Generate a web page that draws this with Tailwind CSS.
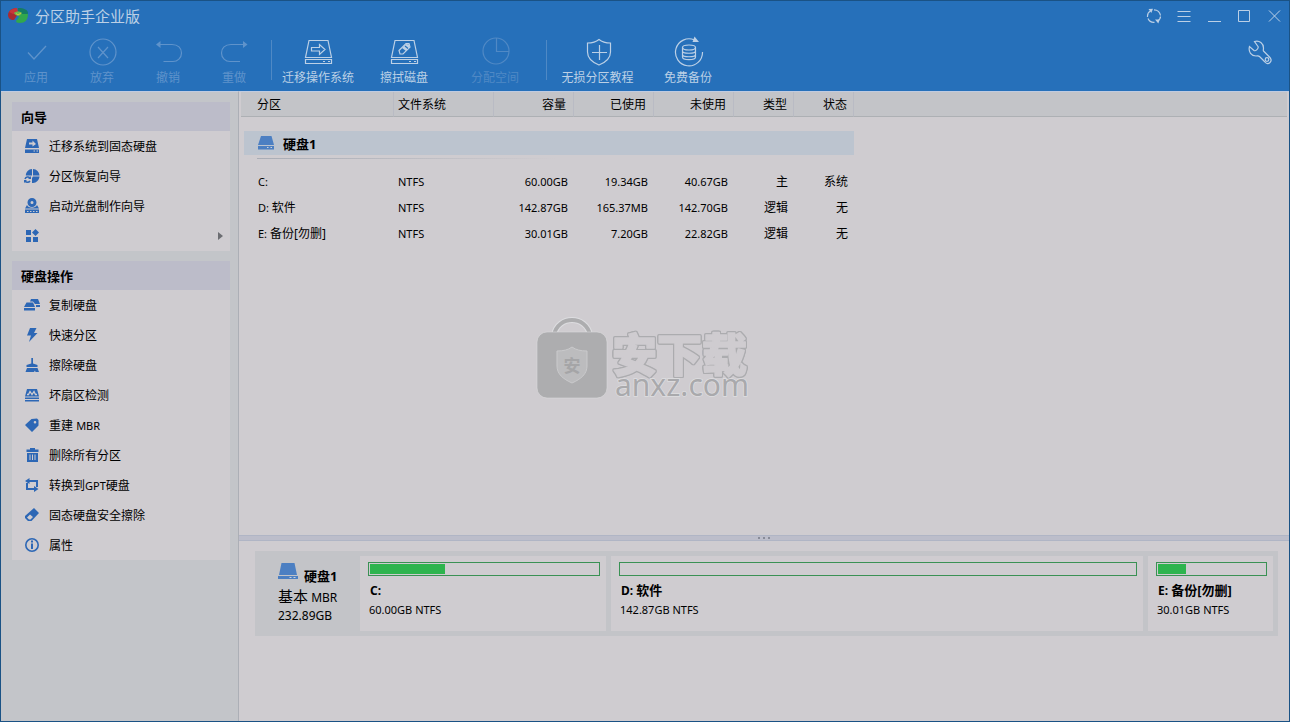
<!DOCTYPE html>
<html lang="zh-CN">
<head>
<meta charset="utf-8">
<meta name="viewport" content="width=device-width, initial-scale=1">
<title>分区助手企业版</title>
<script src="https://cdn.jsdelivr.net/npm/@tailwindcss/browser@4"></script>
</head>
<body class="font-['Noto_Sans','Noto_Sans_CJK_SC',sans-serif] text-xs text-black">
<div class="relative flex min-h-screen flex-col border border-[#1a5285] bg-[#cfccd0]">

  <header class="bg-[#2670ba] text-[#bcd0e6]">
    <div class="flex h-[30px] items-center pr-[5px] pl-[7px]">
      <svg class="h-[18px] w-5" viewBox="0 0 20 18" aria-hidden="true">
        <path d="M0 8C0 4 4 1 9 1l1 6-4 6C2 13 0 11 0 8z" fill="#a92a31"/>
        <path d="M1 5C3 2 6 1 9 1l1 5-5 1z" fill="#c8363a"/>
        <path d="M10 1c6 0 10 2 10 5l-1 4-9-3z" fill="#147d63"/>
        <path d="M10 7l10 0c0 6-3 9-8 9-3 0-4-1-4-2l3-4z" fill="#31a84c"/>
        <path d="M6 6c2-2 6-2 8 0-1 3-6 4-8 0z" fill="#6fb94a"/>
        <path d="M8 6.500l2 1.500 3-2" fill="none" stroke="#d9c23d"/>
      </svg>
      <h1 class="ml-[7px] text-[15px] leading-5">分区助手企业版</h1>
      <div class="ml-auto flex items-center gap-2.5">
        <button type="button" aria-label="刷新" class="flex size-5 items-center justify-center">
          <svg class="size-4" viewBox="0 0 16 16" fill="none" stroke="currentColor" stroke-width="1.200"><path d="M1.500 9V8C1.500 6 2.500 4 4.500 3M8 1.800c3.500 0 6 2.700 6.500 5.700M2 10.500C3 13 5.500 14.500 8.500 14.300M11.500 13c1.800-1 3-2.700 3-4.500"/><path d="M2.500 1l4.500-.300L5.300 5zM9 11.500l4.700 0-1.400 4z" fill="currentColor" stroke="none"/></svg>
        </button>
        <button type="button" aria-label="菜单" class="flex size-5 items-center justify-center">
          <svg class="size-4" viewBox="0 0 16 16" stroke="currentColor"><path d="M1.500 3.500h13M1.500 8.500h13M1.500 13.500h13"/></svg>
        </button>
        <button type="button" aria-label="最小化" class="flex size-5 items-center justify-center">
          <svg class="size-4" viewBox="0 0 16 16" stroke="currentColor"><path d="M2 13.500h13"/></svg>
        </button>
        <button type="button" aria-label="最大化" class="flex size-5 items-center justify-center">
          <svg class="size-4" viewBox="0 0 16 16" fill="none" stroke="currentColor"><path d="M2.500 2.500h11v11h-11z"/></svg>
        </button>
        <button type="button" aria-label="关闭" class="flex size-5 items-center justify-center">
          <svg class="size-4" viewBox="0 0 16 16" stroke="currentColor"><path d="M3 2.500l11 11M14 2.500l-11 11"/></svg>
        </button>
      </div>
    </div>

    <nav class="flex h-[60px] items-start pl-0.5 text-xs">
      <button type="button" disabled class="flex w-[66px] flex-col items-center pt-1 text-[#5f93cb]">
        <svg class="size-8" viewBox="0 0 32 32" fill="none" stroke="currentColor" stroke-width="1.300"><path d="M8 17.500l6 6.500 12-13"/></svg>
        <span class="mt-[3px] leading-4">应用</span>
      </button>
      <button type="button" disabled class="flex w-[66px] flex-col items-center pt-1 text-[#5f93cb]">
        <svg class="size-8" viewBox="0 0 32 32" fill="none" stroke="currentColor" stroke-width="1.200"><circle cx="17" cy="17" r="13"/><path d="M12 12l10 11M22 12L12 23"/></svg>
        <span class="mt-[3px] leading-4">放弃</span>
      </button>
      <button type="button" disabled class="flex w-[66px] flex-col items-center pt-1 text-[#5f93cb]">
        <svg class="size-8" viewBox="0 0 32 32" fill="none" stroke="currentColor" stroke-width="1.200"><path d="M7 9.500h13c6 0 9.500 3.500 9.500 8.500s-4 8.500-8.500 8.500h-9.500"/><path d="M4 9.500L8.500 6v7z" fill="currentColor" stroke="none"/></svg>
        <span class="mt-[3px] leading-4">撤销</span>
      </button>
      <button type="button" disabled class="flex w-[66px] flex-col items-center pt-1 text-[#5f93cb]">
        <svg class="size-8" viewBox="0 0 32 32" fill="none" stroke="currentColor" stroke-width="1.200"><path d="M26 9.500H13C7 9.500 3.500 13 3.500 18s4 8.500 8.500 8.500h10"/><path d="M29.500 9.500L25 6v7z" fill="currentColor" stroke="none"/></svg>
        <span class="mt-[3px] leading-4">重做</span>
      </button>
      <div class="mx-1 mt-[9px] h-10 w-px bg-[#4f89c5]"></div>
      <button type="button" class="flex w-[84px] flex-col items-center pt-1">
        <svg class="size-8" viewBox="0 0 32 32" fill="none" stroke="currentColor" stroke-width="1.200"><path d="M7 5.500h19l3.500 17h-26zM3.500 24.500h26v4h-26zM21 26.500h2M26 26.500h2"/><path d="M9.500 12.500h8V9.500l5.500 5-5.500 5v-3.500h-8z"/></svg>
        <span class="mt-[3px] leading-4 whitespace-nowrap">迁移操作系统</span>
      </button>
      <button type="button" class="flex w-[88px] flex-col items-center pt-1">
        <svg class="size-8" viewBox="0 0 32 32" fill="none" stroke="currentColor" stroke-width="1.200"><path d="M7 5.500h19l3.500 17h-26zM3.500 24.500h26v4h-26zM21 26.500h2M26 26.500h2"/><path d="M11 15.500l7-7h3l1 3.500-7 7h-3z"/><path d="M14 13l4-4 3.500.500v3L18 16z" fill="currentColor" stroke="none"/><path d="M17 11l3 2.500" stroke="#2670ba"/></svg>
        <span class="mt-[3px] leading-4 whitespace-nowrap">擦拭磁盘</span>
      </button>
      <button type="button" disabled class="flex w-[94px] flex-col items-center pt-1 text-[#5089c5]">
        <svg class="size-8" viewBox="0 0 32 32" fill="none" stroke="currentColor" stroke-width="1.200"><circle cx="17" cy="16" r="13"/><path d="M17.500 3v13.500H30"/></svg>
        <span class="mt-[3px] leading-4 whitespace-nowrap">分配空间</span>
      </button>
      <div class="mx-1 mt-[9px] h-10 w-px bg-[#4f89c5]"></div>
      <button type="button" class="flex w-[93px] flex-col items-center pt-1">
        <svg class="size-8" viewBox="0 0 32 32" fill="none" stroke="currentColor" stroke-width="1.200"><path d="M17 4.500c3 2.500 7 3.500 11.500 3.500v9c0 6-4 10-11.500 13C9.500 27 5.500 23 5.500 17V8C10 8 14 7 17 4.500zM17.500 10v15M10 17.500h15"/></svg>
        <span class="mt-[3px] leading-4 whitespace-nowrap">无损分区教程</span>
      </button>
      <button type="button" class="flex w-[88px] flex-col items-center pt-1">
        <svg class="size-8" viewBox="0 0 32 32" fill="none" stroke="currentColor" stroke-width="1.200"><path d="M22.500 5A13.500 13.500 0 1 0 30.500 17"/><path d="M20.500 7l2-5.500 4.500 5.500z" fill="currentColor" stroke="none"/><ellipse cx="17" cy="12.500" rx="6.500" ry="2.500"/><path d="M10.500 12.500V22c0 3.500 13 3.500 13 0v-9.500M10.500 16c0 3 13 3 13 0M10.500 19.500c0 3 13 3 13 0"/></svg>
        <span class="mt-[3px] leading-4 whitespace-nowrap">免费备份</span>
      </button>
      <button type="button" aria-label="设置" class="mt-2 mr-[15px] ml-auto flex size-7 items-center justify-center">
        <svg class="size-7" viewBox="0 0 28 28" fill="none" stroke="currentColor" stroke-width="1.200"><path d="M8.500 2.500c5-1.500 9 2 9 6.500 0 1.500-.500 2.500 0 3l6 6c2 2 2 4 .500 5.500s-3.500 1.500-5-.500l-5.500-5.500c-1-1-2-.500-3.500-.500-4.500 0-8-4-6.500-9.500l4.500 4c1.500 1 5-2 4-4z"/><circle cx="21" cy="20.500" r="1.800"/></svg>
      </button>
    </nav>
  </header>

  <div class="flex flex-1">
    <aside class="w-[238px] shrink-0 border-t border-r border-t-[#c0cbe0] border-r-[#acafb6] bg-[#c3c5c9] pt-2.5 pr-2 pl-[11px]">
      <section class="mb-2.5 bg-[#cfccd0] [&>button>span]:pt-0.5">
        <h2 class="h-[29px] bg-[#bcbcc9] pl-[9px] text-[13px] leading-[30px] font-bold">向导</h2>
        <button type="button" class="flex h-[30px] w-full items-center gap-[9px] pl-3">
          <svg class="size-4" viewBox="0 0 16 16" fill="#2d67b5"><path d="M3 1h10l2 9H1zM1 11.500h14V15H1z"/><path d="M5 4.500h3.500v-2L12 6 8.500 8.500v-2H5z" fill="#cfccd0"/><path d="M9.500 13h1.500M12.500 13H14" stroke="#cfccd0"/></svg>
          <span>迁移系统到固态硬盘</span>
        </button>
        <button type="button" class="flex h-[30px] w-full items-center gap-[9px] pl-3">
          <svg class="size-4" viewBox="0 0 16 16" fill="#2d67b5"><path d="M8 1v6.500H1.800C2 4 4.500 1.200 8 1zM9 1c3.500.200 6.300 3 6.500 6.500H9zM9 8.500h6.500c-.300 3.500-3 6.300-6.500 6.500H8v-5z"/><path d="M1 11a3 3 0 0 1 5-1M6 13a3 3 0 0 1-5 0" fill="none" stroke="#2d67b5" stroke-width="1.500"/><path d="M4 11h3V8zM0 15v-3h3z"/></svg>
          <span>分区恢复向导</span>
        </button>
        <button type="button" class="flex h-[30px] w-full items-center gap-[9px] pl-3">
          <svg class="size-4" viewBox="0 0 16 16" fill="#2d67b5"><path fill-rule="evenodd" d="M8 0a4.500 4.500 0 1 1 0 9 4.500 4.500 0 0 1 0-9zm0 3a1.500 1.500 0 1 0 0 3 1.500 1.500 0 0 0 0-3z"/><path d="M3 7c1.500 3.500 8.500 3.500 10 0l2 3.500H1zM1 11.500h14V15H1z"/><path d="M3 13.500h1.500M6 13.500h1.500M9 13.500h1.500M12 13.500h1.500" stroke="#cfccd0"/></svg>
          <span>启动光盘制作向导</span>
        </button>
        <button type="button" aria-label="更多" class="flex h-[30px] w-full items-center pr-[7px] pl-3">
          <svg class="size-4" viewBox="0 0 16 16" fill="#2d67b5"><path d="M2 2h5v5H2zM2 9h5v5H2zM9 9h5v5H9zM11.500 1L15 4.500 11.500 8 8 4.500z"/></svg>
          <svg class="ml-auto h-2 w-[5px]" viewBox="0 0 5 8" fill="#6c6d72"><path d="M0 0l5 4-5 4z"/></svg>
        </button>
      </section>

      <section class="bg-[#cfccd0] [&>button>span]:pt-0.5">
        <h2 class="h-[29px] bg-[#bcbcc9] pl-[9px] text-[13px] leading-[30px] font-bold">硬盘操作</h2>
        <button type="button" class="flex h-[30px] w-full items-center gap-[9px] pl-3">
          <svg class="size-4" viewBox="0 0 16 16" fill="#2d67b5"><path d="M7 2h7l2 5h-5L9 4.500H6zM12 8h4v2h-4zM2.500 5.500H9l2 4.500H0zM0 11h11v2.500H0z"/></svg>
          <span>复制硬盘</span>
        </button>
        <button type="button" class="flex h-[30px] w-full items-center gap-[9px] pl-3">
          <svg class="size-4" viewBox="0 0 16 16" fill="#2d67b5"><path d="M6 1h6.500L10 6h3.500L5 15l2-6.500H3z"/></svg>
          <span>快速分区</span>
        </button>
        <button type="button" class="flex h-[30px] w-full items-center gap-[9px] pl-3">
          <svg class="size-4" viewBox="0 0 16 16" fill="#2d67b5"><path d="M7.300 1h1.700v5.500l4.500 1.500v2h-11V8l4.800-1.500zM3 11h10.500l1.500 4h-3.500l-.500-1.500L10 15H1.500z"/></svg>
          <span>擦除硬盘</span>
        </button>
        <button type="button" class="flex h-[30px] w-full items-center gap-[9px] pl-3">
          <svg class="size-4" viewBox="0 0 16 16" fill="#2d67b5"><path d="M3 2h10l2 7.500H1zM1 10.500h14V12H1zM1 13h14v1.500H1z"/><path d="M3 7.500h1.500L6 4.500l2 3 2-3 1.500 3H13" fill="none" stroke="#cfccd0" stroke-width="1.300"/></svg>
          <span>坏扇区检测</span>
        </button>
        <button type="button" class="flex h-[30px] w-full items-center gap-[9px] pl-3">
          <svg class="size-4" viewBox="0 0 16 16" fill="#2d67b5"><path fill-rule="evenodd" d="M7.500 2L13 1.500l1.500 1.500v5.500L8 15 1 8zm3.500 2a1.300 1.300 0 1 0 0 2.600A1.300 1.300 0 0 0 11 4z"/></svg>
          <span>重建 <span class="text-[11px]">MBR</span></span>
        </button>
        <button type="button" class="flex h-[30px] w-full items-center gap-[9px] pl-3">
          <svg class="size-4" viewBox="0 0 16 16" fill="#2d67b5"><path d="M6 1h5v1.500h3.500V5H2.500V2.500H6zM3 6h11v9H3z"/><path d="M6 7.500v5.500M8.500 7.500v5.500M11 7.500v5.500" stroke="#cfccd0"/></svg>
          <span>删除所有分区</span>
        </button>
        <button type="button" class="flex h-[30px] w-full items-center gap-[9px] pl-3">
          <svg class="size-4" viewBox="0 0 16 16" fill="none" stroke="#2d67b5" stroke-width="2"><path d="M4 4h9v6M3 6v6h8"/><path d="M5.500 1v6L1 4zM10 9v6l4.500-3z" fill="#2d67b5" stroke="none"/></svg>
          <span>转换到<span class="text-[11px]">GPT</span>硬盘</span>
        </button>
        <button type="button" class="flex h-[30px] w-full items-center gap-[9px] pl-3">
          <svg class="size-4" viewBox="0 0 16 16" fill="#2d67b5"><path fill-rule="evenodd" d="M10 1l5 5L7.500 14H4L1 11V9zM6 7.500L3 10.500 5 12.500h1.500L9 10z"/></svg>
          <span>固态硬盘安全擦除</span>
        </button>
        <button type="button" class="flex h-[30px] w-full items-center gap-[9px] pl-3">
          <svg class="size-4" viewBox="0 0 16 16" fill="none" stroke="#2d67b5"><circle cx="8" cy="8" r="6.200" stroke-width="1.600"/><path d="M8 3.500v2M8 6.500V12" stroke-width="2"/></svg>
          <span>属性</span>
        </button>
      </section>
    </aside>

    <main class="flex min-w-0 flex-1 flex-col">
      <div class="flex-1 border-t border-[#c0cbe0] pr-0.5 pl-0.5">
        <table class="w-full table-fixed border-separate border-spacing-0">
          <colgroup>
            <col class="w-[153px]"><col class="w-[100px]"><col class="w-20"><col class="w-20"><col class="w-20"><col class="w-[60px]"><col class="w-[60px]"><col>
          </colgroup>
          <thead>
            <tr class="h-[25px] bg-[#c3c4c8] text-right [&>th]:border-b [&>th]:border-b-[#adb0b4] [&>th]:pt-0.5 [&>th]:font-normal">
              <th scope="col" class="border-r border-r-[#b9bbc4] pl-4 text-left">分区</th>
              <th scope="col" class="border-r border-r-[#b9bbc4] pl-1 text-left">文件系统</th>
              <th scope="col" class="border-r border-r-[#b9bbc4] pr-[7px]">容量</th>
              <th scope="col" class="border-r border-r-[#b9bbc4] pr-[7px]">已使用</th>
              <th scope="col" class="border-r border-r-[#b9bbc4] pr-[7px]">未使用</th>
              <th scope="col" class="border-r border-r-[#b9bbc4] pr-[6px]">类型</th>
              <th scope="col" class="border-r border-r-[#b9bbc4] pr-[6px]">状态</th>
              <td class="border-b border-b-[#adb0b4]"></td>
            </tr>
          </thead>
          <tbody>
            <tr>
              <th scope="rowgroup" colspan="7" class="pt-3.5 pb-[10px] pl-[3px] text-left">
                <div class="flex h-6 items-center bg-[#bcc4cf] pl-[13px]">
                  <svg class="h-4 w-[18px]" viewBox="0 0 18 16" fill="#4c7fc2"><path d="M4 1h10.500l2.500 9H1zM1 11h16v3.500H1z"/><path d="M10 12.500h1.500M13.500 12.500H15" stroke="#c9d2df"/></svg>
                  <span class="ml-2 pt-0.5 text-[13px] leading-5 font-bold">硬盘1</span>
                </div>
                <div class="mt-[3px] ml-[13px] h-px w-[300px] bg-linear-to-r from-[#a9adb6] to-[#cfccd0]"></div>
              </th>
              <td></td>
            </tr>
            <tr class="h-[26px] text-right">
              <td class="pl-[17px] text-left text-[11px]">C:</td><td class="pl-1 text-left text-[11px]">NTFS</td><td class="pr-1.5 text-[11px]">60.00GB</td><td class="pr-1.5 text-[11px]">19.34GB</td><td class="pr-1.5 text-[11px]">40.67GB</td><td class="pr-1.5">主</td><td class="pr-1.5">系统</td><td></td>
            </tr>
            <tr class="h-[26px] text-right">
              <td class="pl-[17px] text-left"><span class="text-[11px]">D: </span>软件</td><td class="pl-1 text-left text-[11px]">NTFS</td><td class="pr-1.5 text-[11px]">142.87GB</td><td class="pr-1.5 text-[11px]">165.37MB</td><td class="pr-1.5 text-[11px]">142.70GB</td><td class="pr-1.5">逻辑</td><td class="pr-1.5">无</td><td></td>
            </tr>
            <tr class="h-[26px] text-right">
              <td class="pl-[17px] text-left"><span class="text-[11px]">E: </span>备份[勿删]</td><td class="pl-1 text-left text-[11px]">NTFS</td><td class="pr-1.5 text-[11px]">30.01GB</td><td class="pr-1.5 text-[11px]">7.20GB</td><td class="pr-1.5 text-[11px]">22.82GB</td><td class="pr-1.5">逻辑</td><td class="pr-1.5">无</td><td></td>
            </tr>
          </tbody>
        </table>
      </div>

      <div role="separator" aria-orientation="horizontal" class="flex h-1.5 items-center justify-center gap-[3px] border-y border-[#b0b5c5] bg-[#bcbdca]">
        <i class="size-0.5 bg-[#888b98]"></i><i class="size-0.5 bg-[#888b98]"></i><i class="size-0.5 bg-[#888b98]"></i>
      </div>

      <div class="h-[180px] pt-2.5 pr-[11px] pl-4">
        <div class="flex h-[85px] gap-[5px] bg-[#c3c4c8] py-[5px] pr-[5px]">
          <div class="w-[100px] shrink-0 pt-1 pl-[23px]">
            <div class="flex h-[26px] items-start gap-1.5">
              <svg class="mt-0.5 h-[18px] w-5" viewBox="0 0 20 18" fill="#4c7fc2"><path d="M3.500 1h13L19 13H1zM0 14h20v3H0z"/><path d="M11.500 15.500h2M15.500 15.500h2" stroke="#c9d2df"/></svg>
              <span class="pt-1.5 text-[13px] leading-5 font-bold">硬盘1</span>
            </div>
            <p class="text-[15px] leading-5 whitespace-nowrap">基本<span class="text-xs"> MBR</span></p>
            <p class="text-xs leading-5">232.89GB</p>
          </div>
          <section class="min-w-0 grow-[232] basis-0 bg-[#cfccd0] pt-1.5 pr-1.5 pl-2">
            <div role="meter" aria-label="C: 已使用" aria-valuemin="0" aria-valuemax="100" aria-valuenow="32" class="h-3.5 border border-[#3a9154] p-px"><div class="h-full bg-[#2eb44e]" style="width:33%"></div></div>
            <h3 class="mt-1 ml-0.5 h-[18px] text-[13px] leading-5 font-bold"><span class="text-xs">C:</span></h3>
            <p class="mt-[3px] ml-px text-[11px] leading-[18px]">60.00GB NTFS</p>
          </section>
          <section class="min-w-0 grow-[518] basis-0 bg-[#cfccd0] pt-1.5 pr-1.5 pl-2">
            <div role="meter" aria-label="D: 已使用" aria-valuemin="0" aria-valuemax="100" aria-valuenow="0" class="h-3.5 border border-[#3a9154] p-px"></div>
            <h3 class="mt-1 ml-0.5 h-[18px] text-[13px] leading-5 font-bold"><span class="text-xs">D: </span>软件</h3>
            <p class="mt-[3px] ml-px text-[11px] leading-[18px]">142.87GB NTFS</p>
          </section>
          <section class="min-w-0 grow-[111] basis-0 bg-[#cfccd0] pt-1.5 pr-1.5 pl-2">
            <div role="meter" aria-label="E: 已使用" aria-valuemin="0" aria-valuemax="100" aria-valuenow="24" class="h-3.5 border border-[#3a9154] p-px"><div class="h-full bg-[#2eb44e]" style="width:26%"></div></div>
            <h3 class="mt-1 ml-0.5 h-[18px] text-[13px] leading-5 font-bold whitespace-nowrap"><span class="text-xs">E: </span>备份[勿删]</h3>
            <p class="mt-[3px] ml-px text-[11px] leading-[18px]">30.01GB NTFS</p>
          </section>
        </div>
      </div>
    </main>
  </div>

  <!-- Site watermark centred over the window -->
  <div class="pointer-events-none absolute inset-0 flex items-center justify-center">
    <svg class="h-[88px] w-[220px] overflow-visible" viewBox="0 0 220 88">
      <path d="M19 18C23-2 51-2 55 18" fill="none" stroke="#dddde0" stroke-width="6"/>
      <path d="M19 18C23-2 51-2 55 18" fill="none" stroke="#adadaf" stroke-width="4"/>
      <rect x="2" y="15" width="70" height="66" rx="10" fill="#adadaf" stroke="#dadadc" stroke-width=".6"/>
      <path d="M37 30c4 3 9 4 15 4v15c0 8-6 13-15 17-9-4-15-9-15-17V34c6 0 11-1 15-4z" fill="#bcbcbe" stroke="#cacacc"/>
      <text x="37" y="55" text-anchor="middle" font-size="17" font-weight="700" font-family="Noto Sans CJK SC, sans-serif" fill="#a5a5a7">安</text>
      <text x="77" y="55" font-family="Noto Sans CJK SC, sans-serif" font-size="45" font-weight="900" fill="#cfccd0" stroke="#cfccd0" stroke-width="1.500" stroke-linejoin="round" class="drop-shadow-[0_0_1px_#8f8f92] [filter:drop-shadow(1px_0_0_#acacaf)_drop-shadow(-1px_0_0_#acacaf)_drop-shadow(0_1px_0_#acacaf)_drop-shadow(0_-1px_0_#acacaf)]">安下载</text>
      <text x="80" y="79" font-family="Noto Sans, sans-serif" font-size="30" font-weight="400" fill="#a9a9ac" stroke="#dedee0" stroke-width="1.500" paint-order="stroke">anxz.com</text>
    </svg>
  </div>
</div>
</body>
</html>
